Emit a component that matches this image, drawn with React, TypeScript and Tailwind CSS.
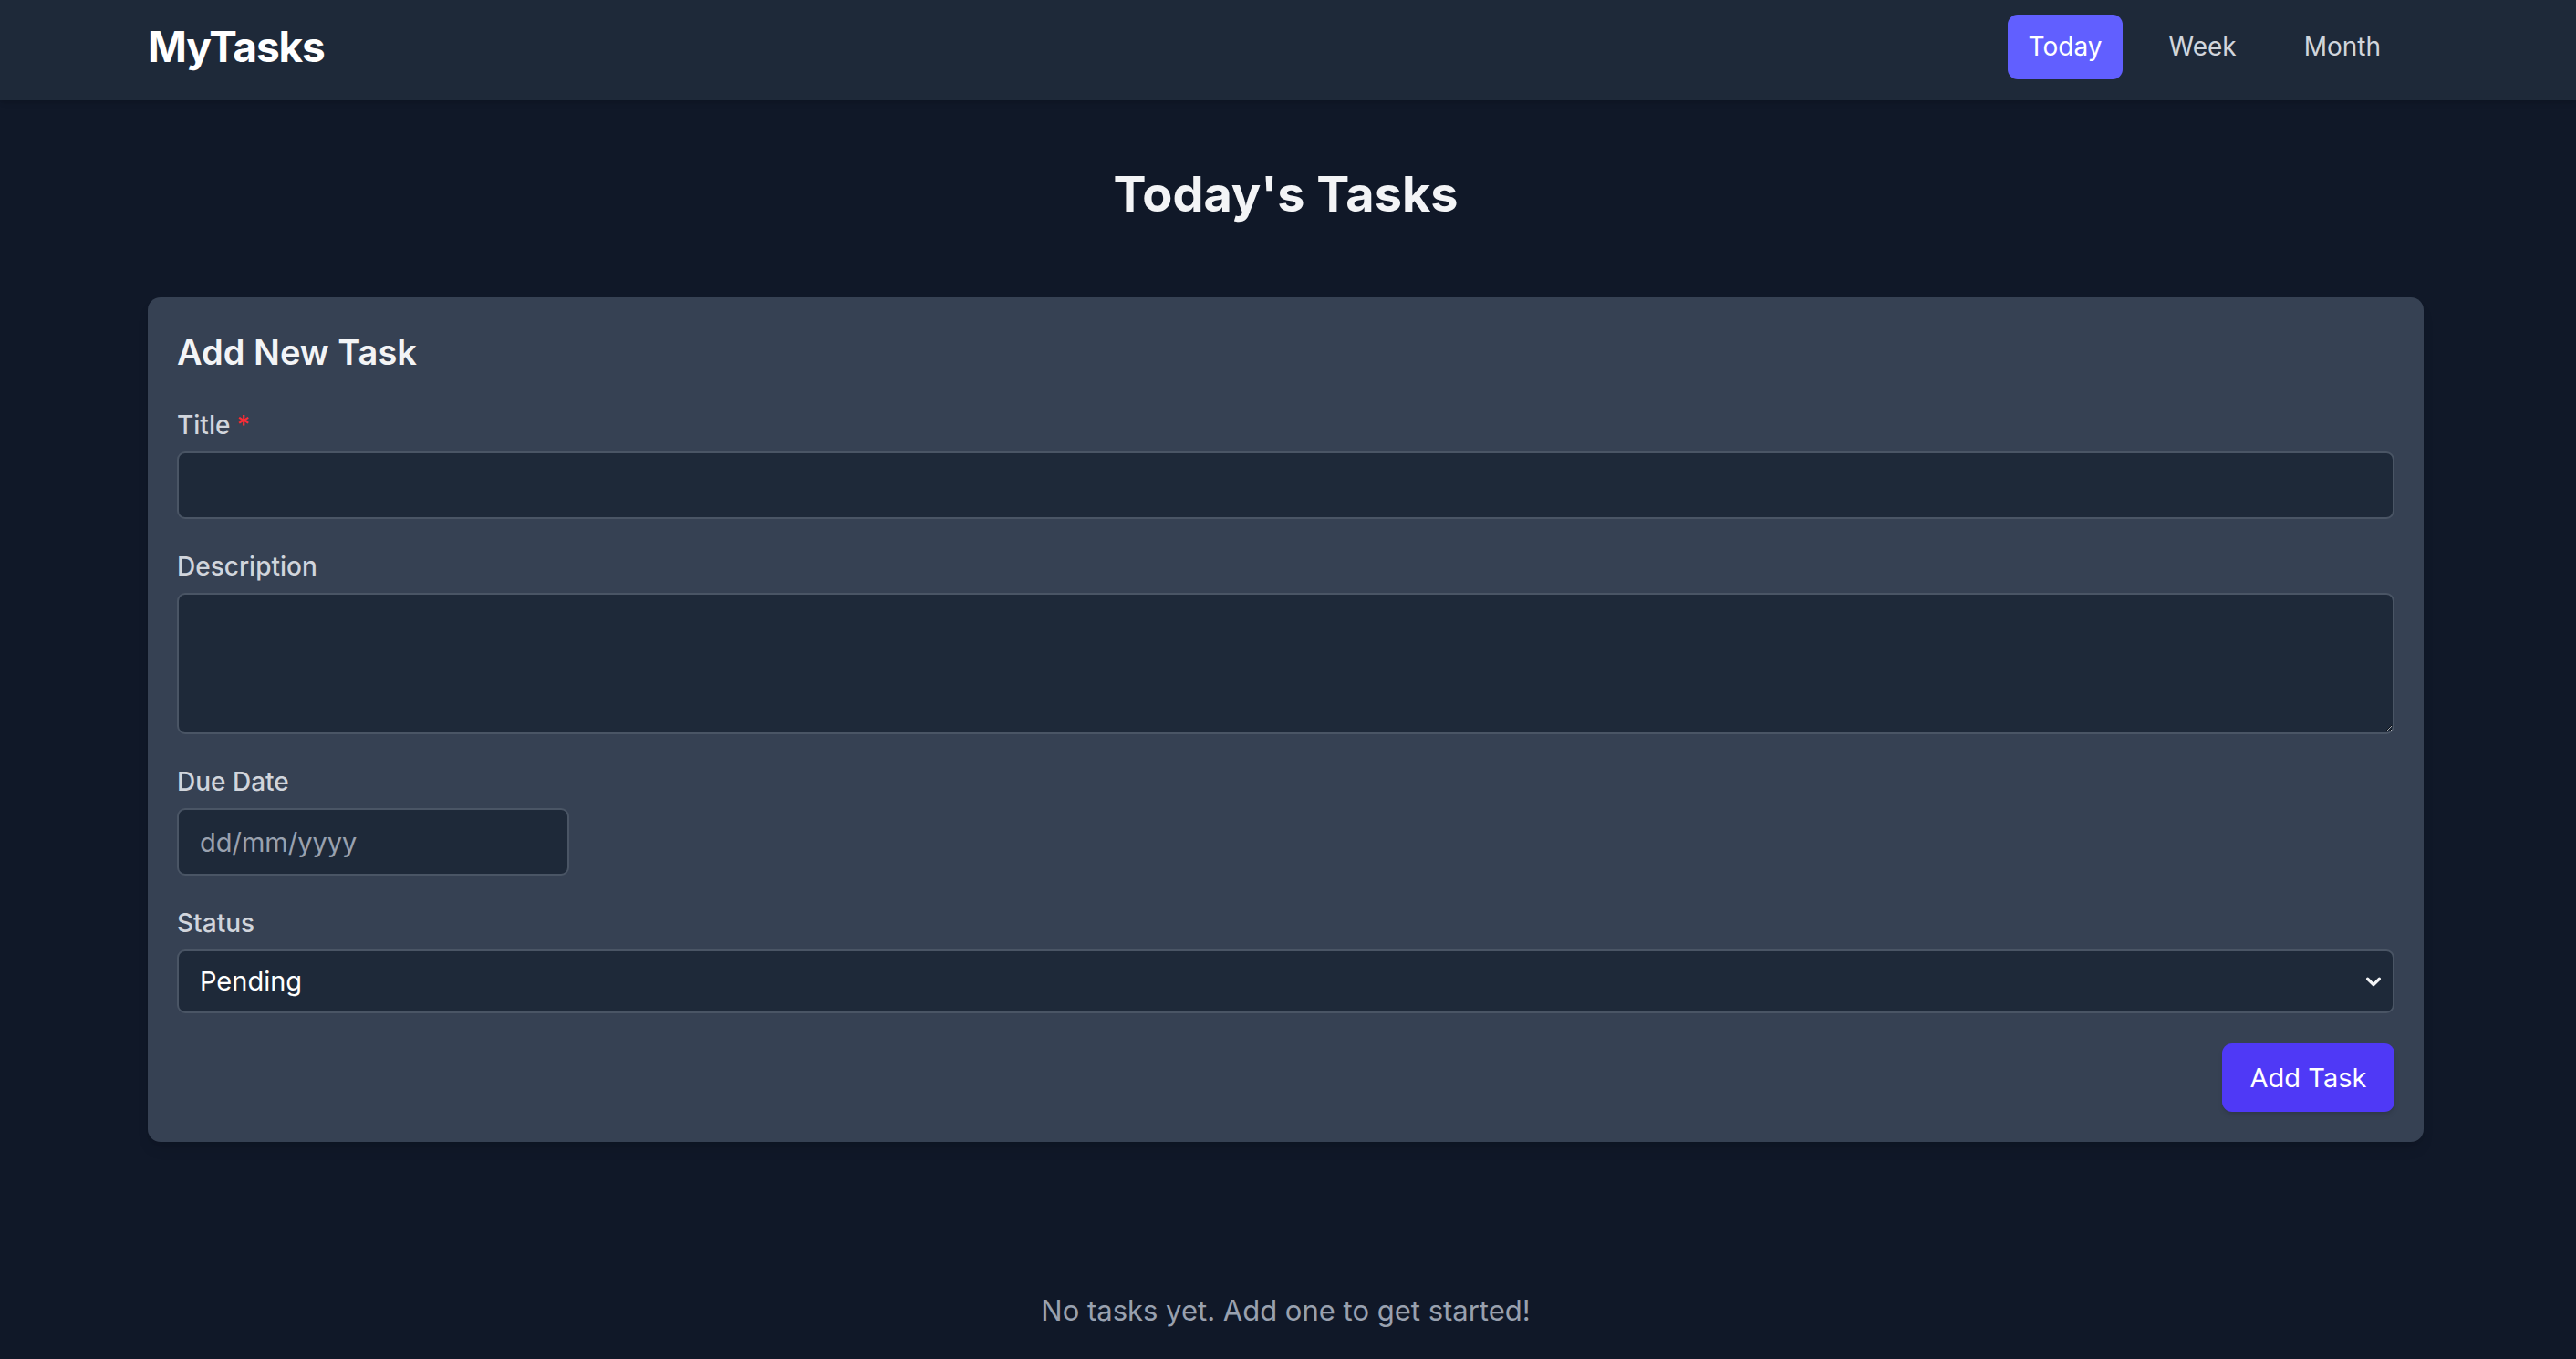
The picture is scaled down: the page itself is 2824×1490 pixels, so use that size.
import { useState } from 'react';

const NAV = ['Today', 'Week', 'Month'];

function Field({ label, required, children }: { label: string; required?: boolean; children: React.ReactNode }) {
  return (
    <div className="mb-[31px]">
      <label className="block text-[28px] leading-[43px] font-medium text-gray-300 mb-[7px]">
        {label}
        {required && <span className="text-red-500 ml-[7px]">*</span>}
      </label>
      {children}
    </div>
  );
}

export default function App() {
  const [active, setActive] = useState('Today');
  const [status, setStatus] = useState('pending');

  return (
    <div className="min-h-screen bg-gray-900 font-['Inter',sans-serif]">
      <header className="bg-gray-800 h-[110px] shadow-md">
        <div className="w-[2495px] ml-[162px] h-full flex items-center justify-between pb-[8px]">
          <h1 className="text-[46px] font-bold text-white tracking-tight">MyTasks</h1>
          <nav className="flex gap-[26px] mr-[23px]">
            {NAV.map((item) => (
              <button
                key={item}
                onClick={() => setActive(item)}
                className={
                  active === item
                    ? 'h-[71px] px-[23px] rounded-[11px] text-[28px] bg-indigo-500 text-white'
                    : 'h-[71px] px-[24px] rounded-[11px] text-[28px] text-gray-300'
                }
              >
                {item}
              </button>
            ))}
          </nav>
        </div>
      </header>

      <main className="w-[2495px] ml-[162px] pt-[70px] pb-[30px]">
        <h2 className="text-center text-[54px] leading-[65px] font-bold text-gray-100 mb-[81px]">Today's Tasks</h2>

        <div className="bg-gray-700 rounded-[14px] p-[32px] pb-[33px] shadow-lg">
          <h3 className="text-[38px] leading-[56px] font-semibold text-gray-100 mb-[31px]">Add New Task</h3>

          <Field label="Title" required>
            <input
              type="text"
              className="block w-full h-[74px] px-[23px] bg-gray-800 border-2 border-gray-600 rounded-[9px] text-[29px] text-white outline-none"
            />
          </Field>

          <Field label="Description">
            <textarea
              className="block w-full h-[155px] px-[23px] py-[14px] bg-gray-800 border-2 border-gray-600 rounded-[9px] text-[29px] text-white outline-none"
            />
          </Field>

          <Field label="Due Date">
            <input
              type="text"
              placeholder="dd/mm/yyyy"
              className="block w-[430px] h-[74px] px-[23px] bg-gray-800 border-2 border-gray-600 rounded-[9px] text-[29px] text-white placeholder:text-gray-400 outline-none"
            />
          </Field>

          <div className="mb-[33px]">
            <label className="block text-[28px] leading-[43px] font-medium text-gray-300 mb-[7px]">Status</label>
            <div className="relative">
              <select
                value={status}
                onChange={(e) => setStatus(e.target.value)}
                className="block w-full h-[70px] px-[23px] bg-gray-800 border-2 border-gray-600 rounded-[9px] text-[29px] text-white outline-none appearance-none"
              >
                <option value="pending">Pending</option>
                <option value="in-progress">In Progress</option>
                <option value="done">Done</option>
              </select>
              <svg
                className="absolute right-[12px] top-1/2 -translate-y-1/2 pointer-events-none"
                width="22"
                height="22"
                viewBox="0 0 24 24"
                fill="none"
                stroke="#f3f4f6"
                strokeWidth="3.5"
                strokeLinecap="round"
                strokeLinejoin="round"
              >
                <path d="M5 9l7 7 7-7" />
              </svg>
            </div>
          </div>

          <div className="flex justify-end">
            <button className="h-[75px] w-[189px] rounded-[11px] bg-indigo-600 text-white text-[29px] shadow-md">
              Add Task
            </button>
          </div>
        </div>

        <p className="text-center text-[31px] leading-[48px] text-gray-400 mt-[161px]">No tasks yet. Add one to get started!</p>
      </main>
    </div>
  );
}
